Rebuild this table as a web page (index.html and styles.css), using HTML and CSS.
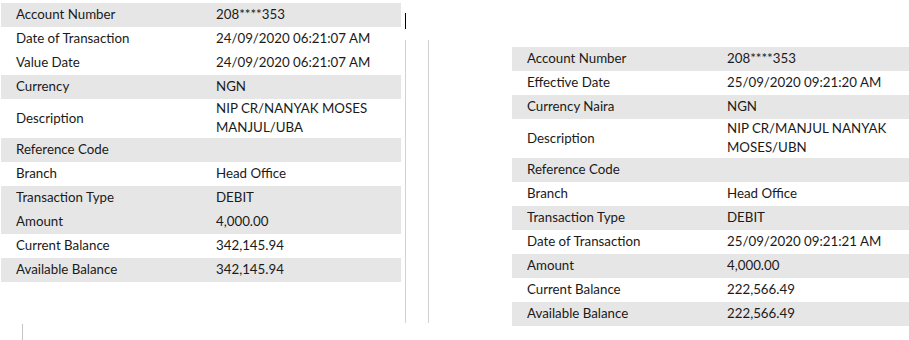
FILE: index.html
```html
<!doctype html>
<html>
<head>
 <title>Transaction Details</title>
 <meta name=viewport content="width=device-width, initial-scale=1">
 <link rel="stylesheet" href="styles.css">
</head>
<body>
<div class=sheet>
 <table class=tx>
  <tr class=shade><td>Account Number</td><td>208****353</td></tr>
  <tr><td>Date of Transaction</td><td>24/09/2020 06:21:07 AM</td></tr>
  <tr><td>Value Date</td><td>24/09/2020 06:21:07 AM</td></tr>
  <tr class=shade><td>Currency</td><td>NGN</td></tr>
  <tr class=tall><td>Description</td><td>NIP CR/NANYAK MOSES<br>MANJUL/UBA</td></tr>
  <tr class=shade><td>Reference Code</td><td></td></tr>
  <tr><td>Branch</td><td>Head Office</td></tr>
  <tr class=shade><td>Transaction Type</td><td>DEBIT</td></tr>
  <tr class=shade><td>Amount</td><td>4,000.00</td></tr>
  <tr><td>Current Balance</td><td>342,145.94</td></tr>
  <tr class=shade><td>Available Balance</td><td>342,145.94</td></tr>
 </table>
 <div class=caret></div>
</div>
<div class=gutter>
 <div class=edge>
  <div class=cursor></div>
  <div class=rule></div>
 </div>
 <div class=edge>
  <div class=rule></div>
 </div>
</div>
<div class="sheet second">
 <table class=tx>
  <tr class=shade><td>Account Number</td><td>208****353</td></tr>
  <tr><td>Effective Date</td><td>25/09/2020 09:21:20 AM</td></tr>
  <tr class=shade><td>Currency Naira</td><td>NGN</td></tr>
  <tr class=tall><td>Description</td><td>NIP CR/MANJUL NANYAK<br>MOSES/UBN</td></tr>
  <tr class=shade><td>Reference Code</td><td></td></tr>
  <tr><td>Branch</td><td>Head Office</td></tr>
  <tr class=shade><td>Transaction Type</td><td>DEBIT</td></tr>
  <tr><td>Date of Transaction</td><td>25/09/2020 09:21:21 AM</td></tr>
  <tr class=shade><td>Amount</td><td>4,000.00</td></tr>
  <tr><td>Current Balance</td><td>222,566.49</td></tr>
  <tr class=shade><td>Available Balance</td><td>222,566.49</td></tr>
 </table>
</div>
</body>
</html>
```
FILE: styles.css
```css
html, body {margin:0; height:340px; overflow:hidden; background:#fff;}
body {
  display:flex;
  align-items:flex-start;
  font-family: Lato, "Open Sans", sans-serif;
  font-size:13.3px;
  color:#1a1a1a;
}
.sheet {flex-shrink:0; margin-left:1px; padding-top:3px;}
.sheet.second {margin-left:83px; padding-top:47px;}
.tx {width:400px; border-collapse:collapse; table-layout:fixed;}
.tx td {
  height:23px;
  padding:0 0 1px 15px;
  line-height:19px;
  vertical-align:middle;
  white-space:nowrap;
}
.tx td:first-child {width:185px;}
.tx tr.tall td {height:36px;}
.tx tr.shade td {background:#e7e6e6;}
.caret {margin:42px 0 0 21px; width:1px; height:18px; background:#c4c4c4;}
.gutter {display:flex; gap:22px; margin-left:4px; flex-shrink:0;}
.edge {display:flex; flex-direction:column;}
.cursor {margin-top:13px; width:1px; height:16px; background:#000;}
.rule {margin-top:40px; width:1px; height:283px; background:#d2d2d2;}
.cursor + .rule {margin-top:11px;}
```
